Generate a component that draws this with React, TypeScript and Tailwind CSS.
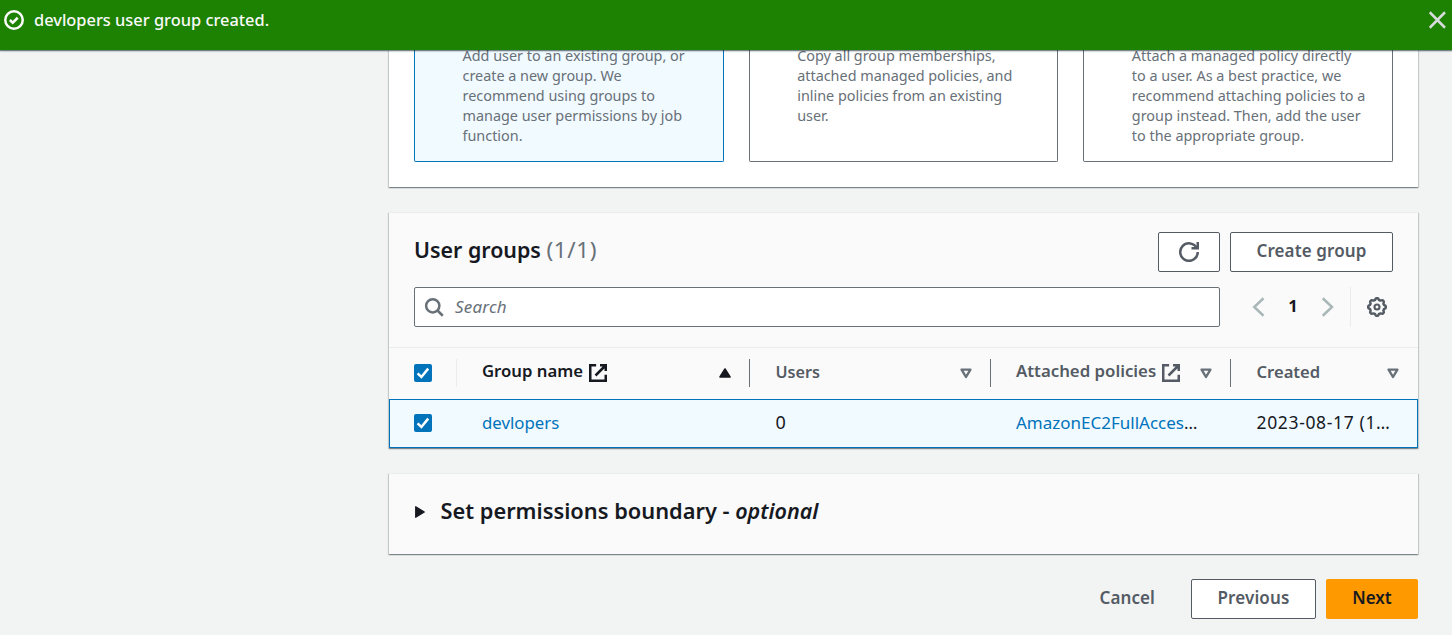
import type { ReactNode } from "react";

const panelShadow =
  "shadow-[0_1px_1px_0_rgba(0,28,36,0.3),1px_1px_1px_0_rgba(0,28,36,0.15),-1px_1px_1px_0_rgba(0,28,36,0.15)]";

function Icon({ children, className = "" }: { children: ReactNode; className?: string }) {
  return (
    <svg viewBox="0 0 16 16" fill="none" stroke="currentColor" strokeWidth={2} className={`size-5 shrink-0 ${className}`}>
      {children}
    </svg>
  );
}

const ExternalIcon = () => (
  <Icon>
    <path d="M6.5 1.8H1.8v12.4h12.4V9.4" />
    <path d="M9.6 1.8h4.6v4.6M14 2 6 10" />
  </Icon>
);

const GEAR_PATH =
  Array.from({ length: 96 }, (_, i) => {
    const a = (i / 96) * Math.PI * 2;
    const bump = Math.max(-1, Math.min(1, 1.5 * Math.cos(8 * a)));
    const r = 6.4 + 0.62 * bump;
    return `${i ? "L" : "M"}${(8 + r * Math.cos(a)).toFixed(2)} ${(8 + r * Math.sin(a)).toFixed(2)}`;
  }).join("") + "Z";

const SortDown = () => (
  <svg viewBox="0 0 12 11" className="mt-px h-[11px] w-3 shrink-0" fill="none" stroke="#687078" strokeWidth={2.4} strokeLinejoin="round">
    <path d="M1.6 1.6h8.8L6 9z" />
  </svg>
);

function Checkbox() {
  return (
    <span className="flex size-[18px] items-center justify-center rounded-[2px] bg-[#0073bb]">
      <svg viewBox="0 0 18 18" className="size-[18px]" fill="none" stroke="#fff" strokeWidth={2.5}>
        <path d="M3.6 9.4 7.4 13 14.2 4.6" />
      </svg>
    </span>
  );
}

function OptionCard({ text, selected = false }: { text: string; selected?: boolean }) {
  return (
    <div
      className={`flex-1 rounded-b-[2px] border border-t-0 pl-[47.5px] ${
        selected ? "border-[#0073bb] bg-[#f1faff]" : "border-[#687078] bg-white"
      }`}
    >
      <p className="-mt-1 whitespace-pre text-[14.4px] leading-5 text-[#687078]">{text}</p>
    </div>
  );
}

function HeaderCell({ children, sort, className = "" }: { children: ReactNode; sort?: ReactNode; className?: string }) {
  return (
    <div className={`flex h-7 items-center justify-between pl-[25px] ${className}`}>
      <span className="flex items-center gap-[5px]">{children}</span>
      {sort}
    </div>
  );
}

const button =
  "flex h-10 items-center justify-center rounded-[2px] border border-[#545b64] bg-white pb-[2px] text-[17px] font-semibold tracking-[0.12px] text-[#545b64]";

const columns = "grid grid-cols-[68px_293px_241px_240px_187px] items-center";

export default function App() {
  return (
    <div className="flex h-[635px] flex-col overflow-hidden bg-[#f2f3f3] font-['Noto_Sans',sans-serif] text-[#16191f]">
      <header className="relative flex h-[50px] shrink-0 items-start justify-between bg-[#1d8102] pl-1 pr-[5px] pt-[10px] text-[#fafafa] shadow-[0_1px_1px_0_rgba(0,28,36,0.4),0_1px_2px_0_rgba(0,28,36,0.3)]">
        <div className="flex items-center gap-[10px]">
          <Icon>
            <circle cx="8" cy="8" r="7" />
            <path d="M4.7 8 7 10.2 11 6.2" />
          </Icon>
          <span className="text-[16.4px] font-medium leading-5">devlopers user group created.</span>
        </div>
        <Icon className="text-[#d5dbdb]">
          <path d="m2.2 1.8 12.2 12.4M14.4 1.8 2.2 14.2" />
        </Icon>
      </header>

      <main className="ml-[389px] flex w-[1029px] flex-col">
        <section className={`flex h-[137px] gap-[25px] bg-white px-[25px] pb-[25px] ${panelShadow}`}>
          <OptionCard
            selected
            text={"Add user to an existing group, or\ncreate a new group. We\nrecommend using groups to\nmanage user permissions by job\nfunction."}
          />
          <OptionCard text={"Copy all group memberships,\nattached managed policies, and\ninline policies from an existing\nuser."} />
          <OptionCard
            text={"Attach a managed policy directly\nto a user. As a best practice, we\nrecommend attaching policies to a\ngroup instead. Then, add the user\nto the appropriate group."}
          />
        </section>

        <section className={`mt-[25px] border-t border-[#eaeded] bg-[#fafafa] ${panelShadow}`}>
          <div className="flex items-start justify-between px-[25px] pt-[19px]">
            <h2 className="mt-[3px] text-[21.4px] font-semibold leading-[30px]">
              User groups <span className="text-[22.5px] font-normal tracking-[0.6px] text-[#687078]">(1/1)</span>
            </h2>
            <div className="flex gap-[10px]">
              <button className={`${button} w-[62px]`}>
                <Icon className="mt-[2px]">
                  <path d="M10 5h5V0" />
                  <path d="M15 8a7 7 0 1 1-.7-3" />
                </Icon>
              </button>
              <button className={`${button} w-[163px]`}>Create group</button>
            </div>
          </div>

          <div className="mt-[15px] flex items-center px-[25px] pb-5">
            <div className="flex h-10 w-[806px] items-center gap-[11px] rounded-[2px] border border-[#687078] bg-white pl-[9px] text-[#687078]">
              <Icon>
                <circle cx="7" cy="7" r="5.3" />
                <path d="m10.8 10.8 4.2 4.2" />
              </Icon>
              <span className="text-[17px] italic tracking-[0.2px]">Search</span>
            </div>
            <div className="ml-7 flex items-center text-[#aab7b8]">
              <Icon>
                <path d="M12.4 1 5 8l7.4 7" />
              </Icon>
              <span className="w-[50px] pb-[2px] text-center text-[16.5px] font-bold text-[#16191f]">1</span>
              <Icon>
                <path d="M3.8 1 11.2 8l-7.4 7" />
              </Icon>
            </div>
            <div className="ml-[12px] flex h-10 items-center border-l border-[#eaeded] pl-[16px] text-[#545b64]">
              <Icon>
                <path d={GEAR_PATH} />
                <circle cx="8" cy="8" r="2" strokeWidth={1.7} />
              </Icon>
            </div>
          </div>

          <div className={`${columns} h-[52px] border-t border-[#eaeded] pb-[2px] text-[16.8px] font-semibold text-[#545b64]`}>
            <div className="flex h-7 items-center border-r border-[#eaeded] pl-[25px]">
              <Checkbox />
            </div>
            <HeaderCell
              className="border-r border-[#687078] pr-[18px] text-[#16191f]"
              sort={
                <svg viewBox="0 0 12 10" className="h-[10px] w-3">
                  <path d="M6 1 11 9H1z" fill="#16191f" stroke="#16191f" strokeWidth={1.6} strokeLinejoin="round" />
                </svg>
              }
            >
              <span className="pb-[3px] text-[16.7px]">Group name</span>
              <ExternalIcon />
            </HeaderCell>
            <HeaderCell className="border-r border-[#687078] pr-[18px]" sort={<SortDown />}>
              <span className="pb-px pl-[0.5px] text-[16.2px]">Users</span>
            </HeaderCell>
            <HeaderCell className="border-r border-[#687078] pr-[18px]" sort={<SortDown />}>
              <span className="pb-[3px]">Attached policies</span>
              <ExternalIcon />
            </HeaderCell>
            <HeaderCell className="pr-[19px]" sort={<SortDown />}>
              <span className="pb-px pl-[0.5px] text-[16.6px]">Created</span>
            </HeaderCell>
          </div>

          <div className={`${columns} h-[49px] border border-[#0073bb] bg-[#f1faff] pb-[2px] text-[17px]`}>
            <div className="pl-6 pt-px">
              <Checkbox />
            </div>
            <span className="pl-6 text-[16.8px] text-[#0073bb]">devlopers</span>
            <span className="pl-[24.5px] text-[18px]">0</span>
            <span className="whitespace-nowrap pl-6">
              <span className="text-[#0073bb]">AmazonEC2FullAcces</span>
              <span className="tracking-[0.5px]">…</span>
            </span>
            <span className="whitespace-nowrap pl-[24.5px] text-[17.5px] tracking-[0.65px]">2023-08-17 (1…</span>
          </div>
        </section>

        <section className={`mt-[25px] flex h-[81px] items-start border-t border-[#eaeded] bg-[#fafafa] pl-[25px] pt-[22px] ${panelShadow}`}>
          <svg viewBox="0 0 12 14" className="mt-[9px] h-[14px] w-3">
            <path d="M1.7 1.7v10.6L10.3 7z" fill="#16191f" stroke="#16191f" strokeWidth={1.2} strokeLinejoin="round" />
          </svg>
          <h2 className="ml-[14.5px] text-[21.8px] font-semibold leading-[30px]">
            Set permissions boundary - <em className="text-[21.5px]">optional</em>
          </h2>
        </section>

        <footer className="mt-[25px] flex items-center justify-end gap-[10px]">
          <button className="mr-[26px] pb-[2px] text-[17px] font-semibold tracking-[0.1px] text-[#545b64]">Cancel</button>
          <button className={`${button} w-[125px]`}>Previous</button>
          <button className="flex h-10 w-[92px] items-center justify-center rounded-[2px] bg-[#ff9900] pb-[2px] text-[17px] font-semibold">
            Next
          </button>
        </footer>
      </main>
    </div>
  );
}
